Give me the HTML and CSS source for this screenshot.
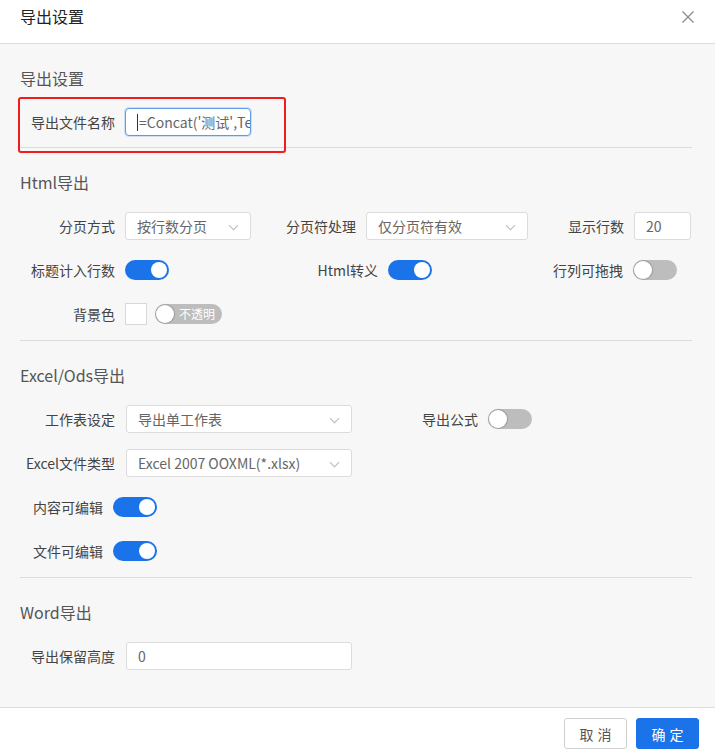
FILE: index.html
```html
<!DOCTYPE html>
<html lang="zh">
<head>
<meta charset="utf-8">
<title>导出设置</title>
<link rel="stylesheet" href="styles.css">
</head>
<body>
<div class="dialog">
  <div class="header">
    <div class="title">导出设置</div>
    <svg class="close" width="12" height="12" viewBox="0 0 12 12"><path d="M0.5 0.5L11.5 11.5M11.5 0.5L0.5 11.5" stroke="#8a8a8a" stroke-width="1.2" fill="none"/></svg>
  </div>
  <div class="body">
    <div class="section">
      <div class="sec-title">导出设置</div>
      <div class="row">
        <div class="mark">
          <span class="lbl w95">导出文件名称</span>
          <div class="input focus"><span class="caret"></span>=Concat('测试',Te</div>
        </div>
      </div>
    </div>

    <div class="section sec-wide">
      <div class="sec-title">Html导出</div>
      <div class="row">
        <span class="lbl w95">分页方式</span>
        <div class="select s1">按行数分页<span class="chev"></span></div>
        <span class="lbl w105">分页符处理</span>
        <div class="select s2">仅分页符有效<span class="chev"></span></div>
        <span class="lbl w96">显示行数</span>
        <div class="input s3">20</div>
      </div>
      <div class="row">
        <span class="lbl w95">标题计入行数</span>
        <div class="toggle on"><span class="knob"></span></div>
        <span class="lbl w209">Html转义</span>
        <div class="toggle on"><span class="knob"></span></div>
        <span class="lbl w191">行列可拖拽</span>
        <div class="toggle"><span class="knob"></span></div>
      </div>
      <div class="row">
        <span class="lbl w95">背景色</span>
        <div class="swatch"></div>
        <div class="toggle wide"><span class="knob"></span><span class="ttext">不透明</span></div>
      </div>
    </div>

    <div class="section sec-wide">
      <div class="sec-title">Excel/Ods导出</div>
      <div class="row">
        <span class="lbl w95b">工作表设定</span>
        <div class="select s4">导出单工作表<span class="chev"></span></div>
        <span class="lbl w126">导出公式</span>
        <div class="toggle"><span class="knob"></span></div>
      </div>
      <div class="row">
        <span class="lbl w95b">Excel文件类型</span>
        <div class="select s4">Excel 2007 OOXML(*.xlsx)<span class="chev"></span></div>
      </div>
      <div class="row">
        <span class="lbl w83">内容可编辑</span>
        <div class="toggle on"><span class="knob"></span></div>
      </div>
      <div class="row">
        <span class="lbl w83">文件可编辑</span>
        <div class="toggle on"><span class="knob"></span></div>
      </div>
    </div>

    <div class="section last">
      <div class="sec-title">Word导出</div>
      <div class="row">
        <span class="lbl w95b">导出保留高度</span>
        <div class="input s4">0</div>
      </div>
    </div>
  </div>
  <div class="footer">
    <button class="btn">取消</button>
    <button class="btn primary">确定</button>
  </div>
</div>
</body>
</html>
```

FILE: styles.css
```css
* { box-sizing: border-box; }
html, body { margin: 0; padding: 0; }
body {
  width: 715px;
  height: 751px;
  font-family: "Noto Sans CJK SC", "Open Sans", sans-serif;
  font-size: 14px;
  color: #444;
  background: #fff;
  overflow: hidden;
}
.dialog { display: flex; flex-direction: column; height: 751px; }
.header {
  height: 44px;
  border-bottom: 1px solid #dcdcdc;
  display: flex;
  align-items: flex-start;
  justify-content: space-between;
  padding: 6px 21px 0 20px;
  background: #fff;
}
.title { font-size: 16px; color: #222; line-height: 20px; }
.close { margin-top: 5px; }
.body {
  flex: 1;
  background: #f7f7f7;
  padding: 0 23px 0 20px;
  border-bottom: 1px solid #dcdcdc;
}
.section {
  border-bottom: 1px solid #dcdcdc;
  padding-top: 24px;
  padding-bottom: 11px;
}
.section.sec-wide { padding-bottom: 12px; }
.section.last { border-bottom: none; }
.sec-title {
  font-size: 16px;
  line-height: 20px;
  color: #555;
  margin-bottom: 20px;
}
.row {
  display: flex;
  align-items: center;
  height: 28px;
  margin-bottom: 16px;
}
.row:last-child { margin-bottom: 0; }
.mark { display: flex; align-items: center; position: relative; }
.mark::after {
  content: "";
  position: absolute;
  left: -2px;
  top: -11px;
  width: 264px;
  height: 52px;
  border: 2px solid #f21c1c;
  border-radius: 3px;
}
.lbl {
  flex: none;
  text-align: right;
  padding-right: 10px;
  white-space: nowrap;
  color: #444;
}
.w95 { width: 105px; }
.w95b { width: 106px; padding-right: 11px; }
.w105 { width: 115px; }
.w96 { width: 106px; }
.w209 { width: 219px; }
.w191 { width: 201px; }
.w126 { width: 136px; }
.w83 { width: 93px; }
.input, .select {
  flex: none;
  height: 28px;
  background: #fff;
  border: 1px solid #dcdcdc;
  border-radius: 3px;
  padding-left: 11px;
  color: #666;
  line-height: 26px;
  white-space: nowrap;
  overflow: hidden;
  position: relative;
}
.input.focus {
  width: 126px;
  border-color: #5b9be8;
  border-radius: 4px;
  box-shadow: 0 0 0 1px rgba(91,155,232,0.25);
  color: #666;
  padding-left: 11px;
  font-size: 14px;
}
.caret {
  display: inline-block;
  width: 1px;
  height: 17px;
  background: #333;
  vertical-align: -3px;
  margin-right: 1px;
}
.s1 { width: 126px; }
.s2 { width: 162px; }
.s3 { width: 57px; }
.s4 { width: 226px; }
.chev {
  position: absolute;
  right: 13px;
  top: 9px;
  width: 7px;
  height: 7px;
  border-right: 1px solid #bbb;
  border-bottom: 1px solid #bbb;
  transform: rotate(45deg);
}
.toggle {
  flex: none;
  width: 44px;
  height: 20px;
  border-radius: 10px;
  background: #bdbdbd;
  position: relative;
}
.toggle.on { background: #1a73e8; }
.knob {
  position: absolute;
  left: 1px;
  top: 1px;
  width: 18px;
  height: 18px;
  border-radius: 50%;
  background: #fff;
  box-shadow: 0 0 1px 1px rgba(0,0,0,0.18);
}
.toggle.on .knob { left: auto; right: 2px; top: 2px; width: 16px; height: 16px; box-shadow: none; }
.toggle.wide {
  width: 67px;
  margin-left: 8px;
}
.ttext {
  position: absolute;
  left: 24px;
  top: 0;
  line-height: 20px;
  font-size: 12px;
  color: #fff;
}
.swatch {
  width: 22px;
  height: 22px;
  background: #fff;
  border: 1px solid #d8d8d8;
}
.footer {
  height: 43px;
  background: #fff;
  display: flex;
  justify-content: flex-end;
  align-items: flex-start;
  padding: 10px 16px 0 0;
  gap: 9px;
}
.btn {
  width: 63px;
  height: 31px;
  border: 1px solid #cfcfcf;
  border-radius: 3px;
  background: #fff;
  color: #555;
  font-family: "Noto Sans CJK SC", sans-serif;
  font-size: 14px;
  letter-spacing: 4px;
  padding: 0 0 0 4px;
}
.btn.primary {
  background: #1a73e8;
  border-color: #1a73e8;
  color: #fff;
}
```
